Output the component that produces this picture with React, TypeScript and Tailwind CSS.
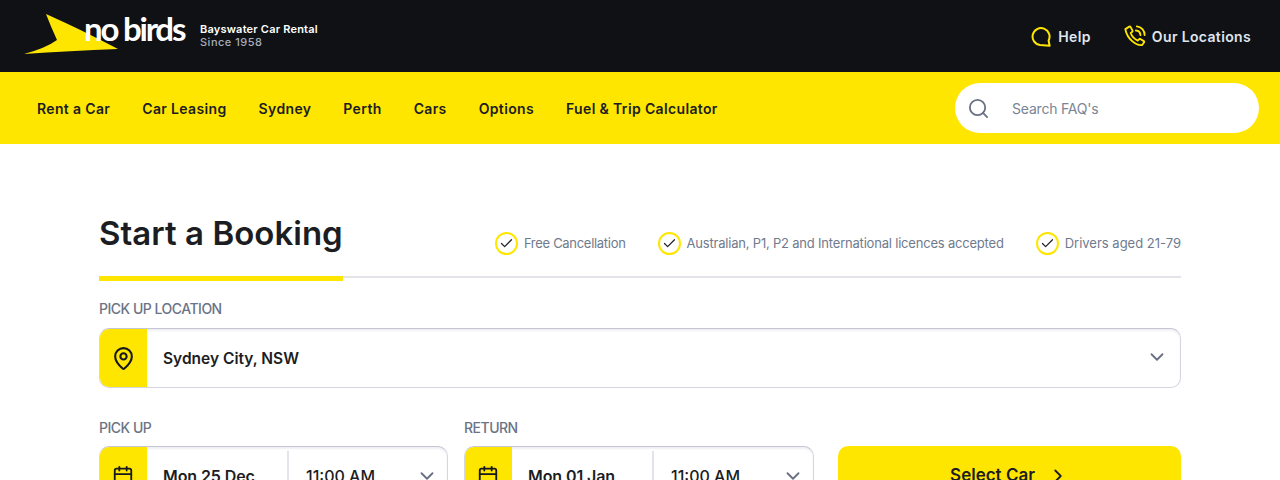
import { Check, ChevronDown, ChevronRight, Search, MapPin, Calendar } from "lucide-react";

function Logo() {
  return (
    <div className="relative w-[162px] h-[42px] shrink-0">
      <svg viewBox="0 0 96 42" className="absolute left-0 top-[-2px] w-[96px] h-[42px]">
        <path d="M22 1 Q60 18 94 36 Q45 38 0 41 Q22 35 33 27 Q27 14 22 1 Z" fill="#ffe600" />
      </svg>
      <span className="absolute left-[60px] top-[-8px] text-[33px] leading-[42px] font-bold text-white tracking-[-2.2px] font-['Lato',sans-serif] whitespace-nowrap">
        no birds
      </span>
    </div>
  );
}

function BookingField({ icon, children, className }: { icon: React.ReactNode; children: React.ReactNode; className?: string }) {
  return (
    <div className={`flex h-[60px] rounded-[10px] border border-[#d5d6de] border-t-[#c4c6d2] shadow-[inset_0_2px_2px_#f0f0f4] bg-white overflow-hidden ${className ?? ""}`}>
      <div className="w-[48px] ml-[-1px] mt-[-1px] h-[60px] bg-[#ffe600] flex items-center justify-center shrink-0 rounded-l-[10px]">{icon}</div>
      {children}
    </div>
  );
}

function DateField({ date }: { date: string }) {
  return (
    <BookingField icon={<Calendar size={22} strokeWidth={2} className="text-[#16181d]" />}>
      <div className="w-[142px] flex items-center pl-4 my-[4px] border-r-2 border-[#e3e3e9] text-[16px] font-semibold tracking-[-0.1px] text-[#1c1d22]">
        {date}
      </div>
      <div className="flex-1 flex items-center justify-between pl-[17px] pr-[9px] text-[16px] font-medium text-[#1c1d22]">
        <span>11:00 AM</span>
        <ChevronDown size={22} strokeWidth={2} className="text-[#687082]" />
      </div>
    </BookingField>
  );
}

function Perk({ text, tracking }: { text: string; tracking: string }) {
  return (
    <div className="flex items-center gap-[6px]">
      <span className="w-[23px] h-[23px] rounded-full border-2 border-[#ffe600] flex items-center justify-center">
        <Check size={15} strokeWidth={2} className="text-[#22242a]" />
      </span>
      <span className={`text-[13px] text-[#6f7a8d] ${tracking}`}>{text}</span>
    </div>
  );
}

const label = "text-[14px] leading-[20px] font-medium tracking-[-0.5px] text-[#6b7486]";

export default function App() {
  const nav = ["Rent a Car", "Car Leasing", "Sydney", "Perth", "Cars", "Options", "Fuel & Trip Calculator"];
  return (
    <div className="h-[480px] overflow-hidden bg-white font-['Inter',sans-serif]">
      <header className="h-[72px] bg-[#101115] flex items-center justify-between pl-[24px] pr-[29px]">
        <div className="flex items-center gap-[14px]">
          <Logo />
          <div className="text-[11px] leading-[13px] tracking-[0.2px]">
            <div className="font-semibold text-white">Bayswater Car Rental</div>
            <div className="font-medium tracking-[0.5px] text-[#a7adbb]">Since 1958</div>
          </div>
        </div>
        <div className="flex items-center gap-[33px] text-[14px] font-semibold tracking-[0.35px] text-[#dfe5f0]">
          <div className="flex items-center gap-[7px]">
            <svg viewBox="0 0 20 20" className="w-[20px] h-[20px] mt-[1px]" fill="none" stroke="#ffe600" strokeWidth="2" strokeLinejoin="round">
              <path d="M9 18 A8.5 8.5 0 1 1 17.6 13.5 L18.6 18.8 Z" />
            </svg>
            <span>Help</span>
          </div>
          <div className="flex items-center gap-[6px]">
            <svg viewBox="0 0 24 24" className="w-[22px] h-[22px]" fill="none" stroke="#ffe600" strokeWidth="2" strokeLinecap="round" strokeLinejoin="round">
              <path d="M1.5 4.5 5.8 1.8a1 1 0 0 1 1.3.3l2.2 4a1 1 0 0 1-.2 1.2L7.3 8.8c1 3 4 6.5 7.7 8.2l1.7-1.7a1 1 0 0 1 1.2-.1l3.7 2.4a1 1 0 0 1 .2 1.5l-2 2.8c-6 1-16-6-18.3-17Z" />
              <path d="M13 6a5.5 5.5 0 0 1 5 5" />
              <path d="M14 1.5A9.5 9.5 0 0 1 22.5 11" />
            </svg>
            <span>Our Locations</span>
          </div>
        </div>
      </header>

      <nav className="h-[72px] bg-[#ffe600] flex items-center justify-between pl-[37px] pr-[21px]">
        <div className="flex items-center gap-[32px] text-[14px] font-semibold tracking-[0.35px] text-[#1c1d22]">
          {nav.map((n) => <span key={n}>{n}</span>)}
        </div>
        <div className="w-[304px] h-[50px] bg-white rounded-[25px] flex items-center pl-[12px]">
          <Search size={23} strokeWidth={1.9} className="text-[#687082]" />
          <span className="ml-[22px] text-[14px] tracking-[-0.2px] text-[#7a8494]">Search FAQ's</span>
        </div>
      </nav>

      <main className="px-[99px] pt-[66px]">
        <div className="flex items-end justify-between border-b-2 border-[#e3e3e9] h-[68px]">
          <h1 className="relative h-[66px] w-[244px] text-[33px] leading-[46px] font-semibold tracking-[0.03px] text-[#1c1d22] whitespace-nowrap">
            Start a Booking
            <span className="absolute left-0 right-0 bottom-[-5px] h-[5px] bg-[#ffe600]" />
          </h1>
          <div className="flex items-center gap-[32px] pb-[21px]">
            <Perk text="Free Cancellation" tracking="tracking-[-0.3px]" />
            <Perk text="Australian, P1, P2 and International licences accepted" tracking="tracking-[-0.2px]" />
            <Perk text="Drivers aged 21-79" tracking="tracking-[0px]" />
          </div>
        </div>

        <div className={`mt-[21px] mb-[9px] ${label}`}>PICK UP LOCATION</div>
        <BookingField icon={<MapPin size={25} strokeWidth={2} className="text-[#16181d]" />}>
          <div className="flex-1 flex items-center justify-between pl-4 pr-[12px]">
            <span className="pt-[2px] text-[15.5px] font-semibold text-[#1c1d22]">Sydney City, NSW</span>
            <ChevronDown size={22} strokeWidth={2} className="text-[#687082] mt-[-2px]" />
          </div>
        </BookingField>

        <div className="flex gap-[16px] mt-[30px]">
          <div className="w-[349px]">
            <div className={`mb-[8px] ${label}`}>PICK UP</div>
            <DateField date="Mon 25 Dec" />
          </div>
          <div className="w-[350px]">
            <div className={`mb-[8px] ${label}`}>RETURN</div>
            <DateField date="Mon 01 Jan" />
          </div>
          <div className="flex-1 ml-[8px] pt-[28px]">
            <div className="h-[60px] rounded-[10px] bg-[#ffe600] flex items-center justify-center gap-[12px] text-[17px] font-semibold text-[#1c1d22]">
              <span>Select Car</span>
              <ChevronRight size={22} strokeWidth={2} />
            </div>
          </div>
        </div>
      </main>
    </div>
  );
}
